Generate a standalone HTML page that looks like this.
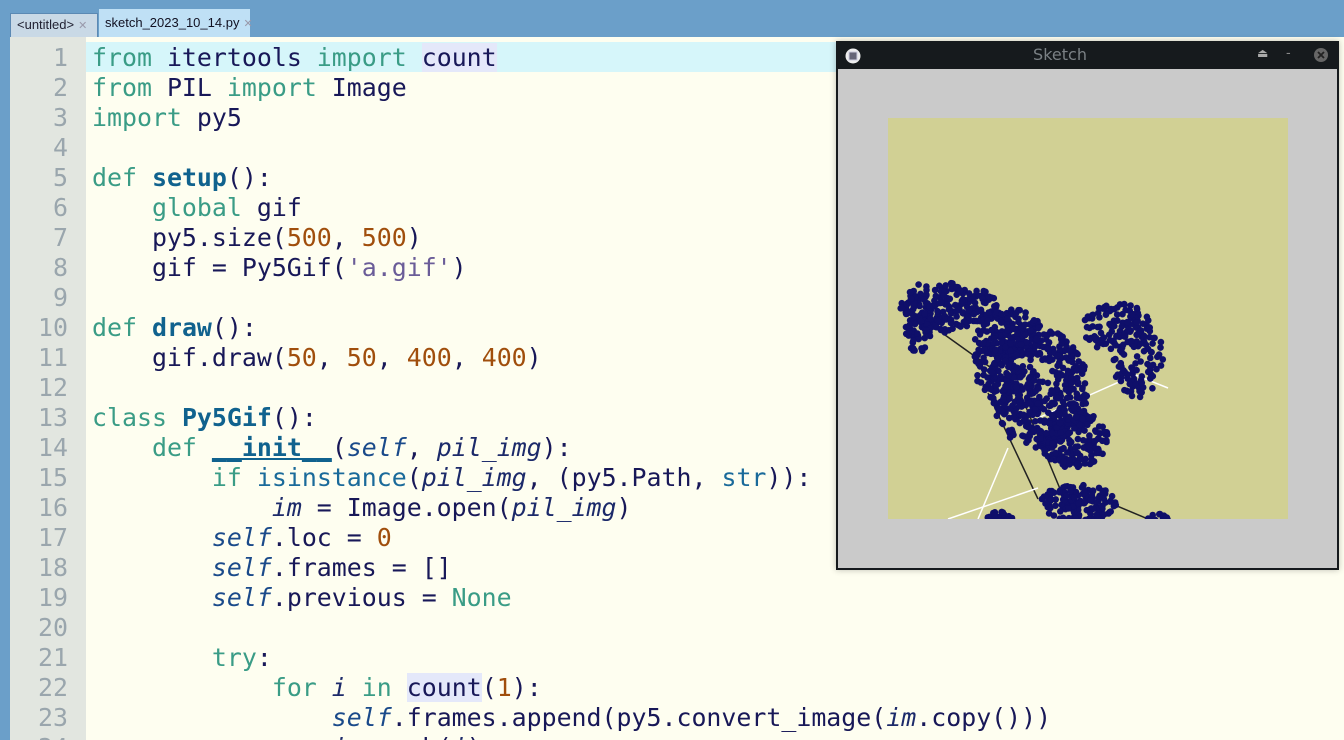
<!DOCTYPE html>
<html><head><meta charset="utf-8"><style>
html,body{margin:0;padding:0;width:1344px;height:740px;overflow:hidden;background:#6b9fc9;position:relative}
.tab{position:absolute;top:11px;height:26px;font:13px "Liberation Sans","DejaVu Sans",sans-serif;line-height:24px;box-sizing:border-box}
#t1{left:10px;width:88px;background:#c9d9e6;color:#223;border:1px solid #5b89b3;border-bottom:none;padding-left:6px;top:13px;height:24px;line-height:22px}
#t2{left:99px;width:151px;background:#bfe0f5;color:#112;padding-left:6px;top:9px;height:28px;line-height:28px}
.x{color:#99a;font-size:11px;margin-left:4px}
#gut{position:absolute;left:10px;top:37px;width:76px;height:703px;background:#e2e6e0}
#ed{position:absolute;left:86px;top:37px;width:1258px;height:703px;background:#fefef0}
#hl{position:absolute;left:86px;top:42px;width:760px;height:30px;background:#d6f6fa}
.ln,.code{position:absolute;font-family:"DejaVu Sans Mono","Liberation Mono",monospace;font-size:24.9px;line-height:30px;white-space:pre}
.ln{left:10px;width:58px;text-align:right;color:#9aa6ad;top:43px}
.code{left:92px;top:43px;color:#181858}
.k{color:#3a9c86}.n{color:#a04e0c}.s{color:#6a5c98}.f{color:#10628e;font-weight:bold}.i{font-style:italic;color:#1c2a6a}.sf{font-style:italic;color:#1a4a8a}.m{background:#e4e8fa}
#win{position:absolute;left:836px;top:41px;width:503px;height:529px;background:#161a1d;box-shadow:0 0 6px rgba(0,0,0,.25)}
#tt{position:absolute;left:0;top:0;width:448px;height:28px;color:#7a8084;font:16px "DejaVu Sans",sans-serif;text-align:center;line-height:28px}
#cnt{position:absolute;left:2px;top:28px;width:499px;height:499px;background:#cacaca}
#sq{position:absolute;left:50px;top:49px;width:400px;height:401px;background:#d1d094;overflow:hidden}
</style></head><body>
<div class="tab" id="t1">&lt;untitled&gt;<span class="x">✕</span></div>
<div class="tab" id="t2">sketch_2023_10_14.py<span class="x">✕</span></div>
<div id="gut"></div><div id="ed"></div><div id="hl"></div>
<div class="ln">1
2
3
4
5
6
7
8
9
10
11
12
13
14
15
16
17
18
19
20
21
22
23
24</div>
<div class="code"><span class="k">from</span> itertools <span class="k">import</span> <span class="m">count</span>
<span class="k">from</span> PIL <span class="k">import</span> Image
<span class="k">import</span> py5

<span class="k">def</span> <span class="f">setup</span>():
    <span class="k">global</span> gif
    py5.size(<span class="n">500</span>, <span class="n">500</span>)
    gif = Py5Gif(<span class="s">'a.gif'</span>)

<span class="k">def</span> <span class="f">draw</span>():
    gif.draw(<span class="n">50</span>, <span class="n">50</span>, <span class="n">400</span>, <span class="n">400</span>)

<span class="k">class</span> <span class="f">Py5Gif</span>():
    <span class="k">def</span> <span class="f" style="text-decoration:underline">__init__</span>(<span class="sf">self</span>, <span class="i">pil_img</span>):
        <span class="k">if</span> <span class="k" style="color:#1a6a9a">isinstance</span>(<span class="i">pil_img</span>, (py5.Path, <span class="k" style="color:#1a6a9a">str</span>)):
            <span class="i">im</span> = Image.open(<span class="i">pil_img</span>)
        <span class="sf">self</span>.loc = <span class="n">0</span>
        <span class="sf">self</span>.frames = []
        <span class="sf">self</span>.previous = <span class="k">None</span>

        <span class="k">try</span>:
            <span class="k">for</span> <span class="i">i</span> <span class="k">in</span> <span class="m">count</span>(<span class="n">1</span>):
                <span class="sf">self</span>.frames.append(py5.convert_image(<span class="i">im</span>.copy()))
                <span class="i">im</span>.seek(<span class="i">i</span>)</div>
<div id="win">
<div id="tt">Sketch</div>
<svg style="position:absolute;left:8px;top:6px" width="18" height="18"><circle cx="9" cy="9" r="7.5" fill="#eee"/><rect x="5" y="5" width="8" height="8" fill="#667" stroke="#ccd"/></svg>
<div style="position:absolute;left:421px;top:5px;color:#aaa;font:12px sans-serif">⏏</div>
<div style="position:absolute;left:450px;top:3px;color:#888;font:14px sans-serif">-</div>
<svg style="position:absolute;left:477px;top:6px" width="16" height="16"><circle cx="8" cy="8" r="7" fill="#666"/><path d="M5 5L11 11M11 5L5 11" stroke="#222" stroke-width="1.8"/></svg>
<div id="cnt"><div id="sq"><svg id="dots" width="400" height="401"></svg></div></div>
</div>
<script>
var s=12345;function r(){s=(s*16807)%2147483647;return s/2147483647;}
var g=document.getElementById('dots'),h='';
var L=[[50,212,120,262,'#222'],[100,275,150,381,'#222'],[230,250,280,270,'#fff'],[130,270,180,390,'#222'],[210,380,260,401,'#222'],[240,260,150,300,'#fff'],[120,330,90,401,'#fff'],[150,370,60,401,'#fff']];
L.forEach(function(l){h+='<line x1="'+l[0]+'" y1="'+l[1]+'" x2="'+l[2]+'" y2="'+l[3]+'" stroke="'+l[4]+'" stroke-width="1.5"/>';});
var C=[[60,190,50,25,200],[30,200,15,35,70],[120,215,35,25,150],[150,270,50,60,450],[185,320,35,30,180],[230,210,35,25,110],[250,240,25,40,90],[110,250,25,35,80],[190,385,40,18,140],[110,400,15,8,30],[270,400,10,4,15]];
C.forEach(function(c){for(var k=0;k<c[4];k++){var a=r()*6.283,d=Math.sqrt(r());var x=c[0]+Math.cos(a)*d*c[2],y=c[1]+Math.sin(a)*d*c[3];h+='<circle cx="'+x.toFixed(1)+'" cy="'+y.toFixed(1)+'" r="3.3" fill="#0f0f6a"/>';}});
g.innerHTML=h;
</script>
</body></html>
